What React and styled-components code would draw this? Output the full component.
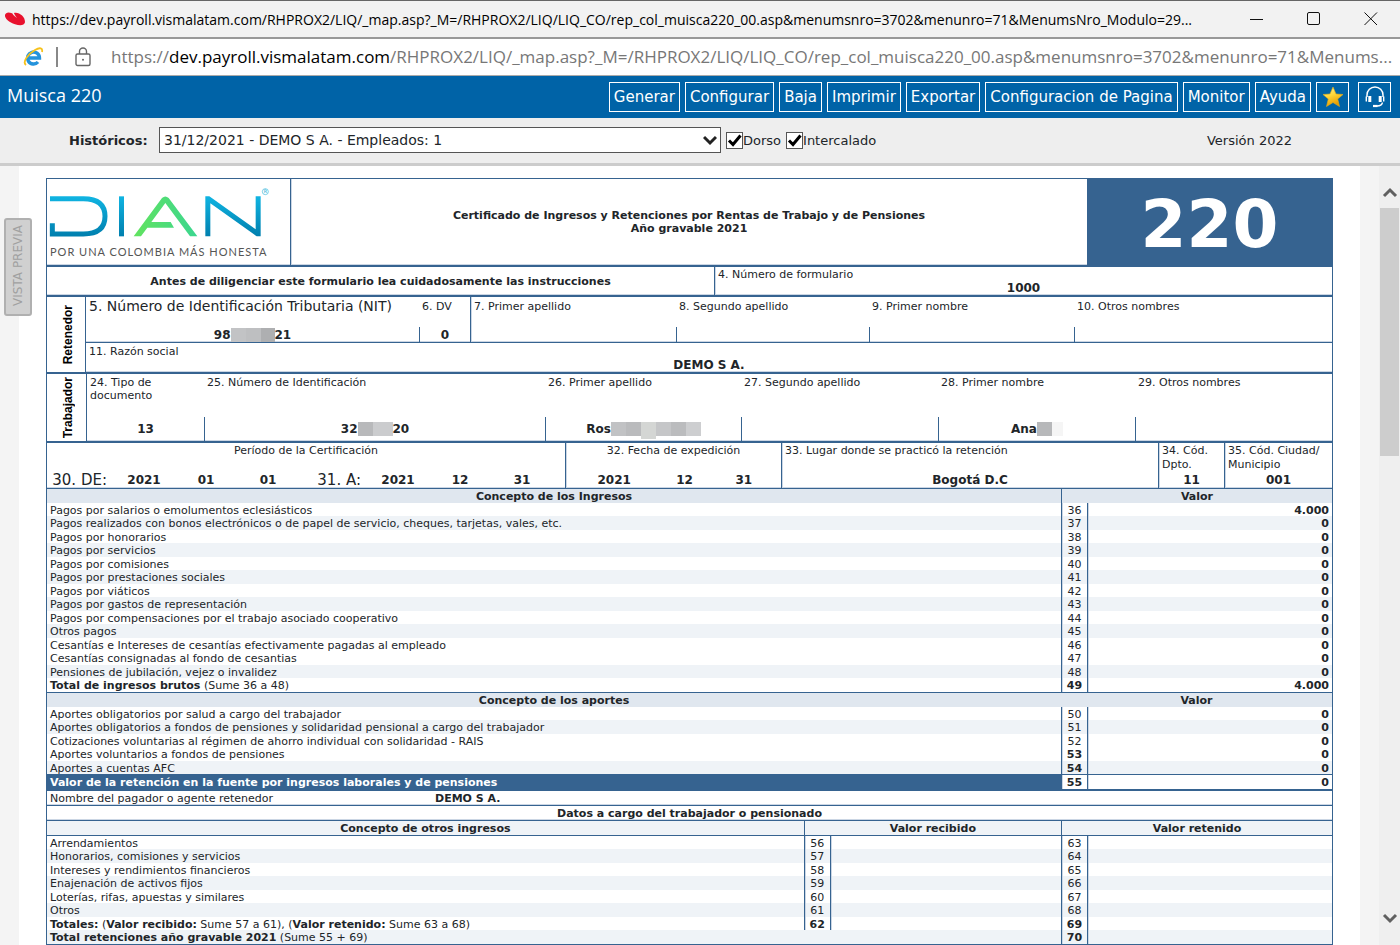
import React from 'react';
import styled, { createGlobalStyle, css } from 'styled-components';

const colours = {
    navy: '#366390',
    line: '#366390',
    soft: '#cbd6e4',
    head: '#e0e7ef',
    stripe: '#eff3f7',
    text: '#212529',
    toolbar: '#0063a7',
};

const GlobalStyle = createGlobalStyle`
    * { box-sizing: border-box; }
    body {
        margin: 0;
        background: #fff;
        color: ${colours.text};
        font-family: 'DejaVu Sans', sans-serif;
        font-size: 11px;
    }
`;

const Page = styled.div`
    display: flex;
    flex-direction: column;
    min-height: 100vh;
`;

/* ---------- browser window ---------- */

const TitleBar = styled.header`
    display: flex;
    align-items: center;
    height: 39px;
    padding-left: 4px;
    background: #f2f2f2;
    border-top: 1px solid #666;
    border-bottom: 2px solid #999;
    color: #000;
    font-family: 'Open Sans', sans-serif;
    font-size: 14px;
`;

const WindowTitle = styled.span`
    flex: 1;
    min-width: 0;
    margin-left: 6px;
    overflow: hidden;
    white-space: nowrap;
    text-overflow: ellipsis;
`;

const WindowButtons = styled.div`
    display: flex;
    padding-right: 1px;
`;

const WindowButton = styled.button`
    display: flex;
    align-items: center;
    justify-content: center;
    width: 57px;
    height: 36px;
    padding: 0;
    border: 0;
    background: none;
    color: #111;
`;

const AddressBar = styled.div`
    display: flex;
    align-items: center;
    height: 37px;
    padding: 0 5px 1px 23px;
    background: #fff;
    border-bottom: 1px solid #aaa;
    color: #777;
    font-family: 'Open Sans', sans-serif;
    font-size: 17px;
`;

const Divider = styled.span`
    width: 2px;
    height: 20px;
    margin: 0 17px 0 12px;
    background: #888;
`;

const Address = styled.span`
    flex: 1;
    min-width: 0;
    margin-left: 20px;
    overflow: hidden;
    white-space: nowrap;
    text-overflow: ellipsis;
`;

const Domain = styled.span`
    color: #000;
`;

/* ---------- application bars ---------- */

const Toolbar = styled.div`
    display: flex;
    align-items: center;
    height: 42px;
    padding: 0 9px 0 7px;
    background: ${colours.toolbar};
    color: #fff;
`;

const PageTitle = styled.h1`
    flex: 1;
    margin: 0;
    padding-bottom: 4px;
    font-family: 'Open Sans', sans-serif;
    font-size: 18px;
    font-weight: 400;
`;

const Actions = styled.nav`
    display: flex;
    gap: 5px;
`;

const Action = styled.button`
    display: flex;
    align-items: center;
    justify-content: center;
    height: 30px;
    min-width: 33px;
    padding: 0 4px;
    margin-left: ${({ $apart }) => ($apart ? '4px' : '0')};
    border: 1px solid #fff;
    border-radius: 0;
    background: ${colours.toolbar};
    color: #fff;
    font-family: inherit;
    font-size: 15px;
    white-space: nowrap;
`;

const FilterBar = styled.div`
    display: flex;
    align-items: center;
    height: 48px;
    padding: 0 108px 1px 69px;
    background: #eee;
    border-bottom: 3px solid #ccc;
    font-size: 13px;
`;

const FilterLabel = styled.label`
    width: 90px;
    font-weight: 700;
`;

const SelectBox = styled.div`
    display: grid;
    flex: 0 1 562px;
    align-items: center;

    > * {
        grid-area: 1 / 1;
    }

    svg {
        justify-self: end;
        margin-right: 4px;
        pointer-events: none;
    }
`;

const Select = styled.select`
    width: 100%;
    height: 26px;
    padding: 0 20px 0 4px;
    appearance: none;
    border: 1px solid #555;
    border-radius: 0;
    background: #fff;
    color: ${colours.text};
    font-family: inherit;
    font-size: 14px;
`;

const CheckLabel = styled.label`
    display: flex;
    align-items: center;
    margin-left: 5px;
`;

const CheckBox = styled.span`
    display: grid;

    > * {
        grid-area: 1 / 1;
    }

    input {
        width: 17px;
        height: 17px;
        margin: 0;
        appearance: none;
        border: 1px solid #555;
        background: #fff;
    }

    svg {
        visibility: hidden;
        pointer-events: none;
    }

    input:checked + svg {
        visibility: visible;
    }
`;

const Version = styled.span`
    margin-left: auto;
`;

/* ---------- viewer ---------- */

const Viewer = styled.main`
    position: relative;
    display: flex;
    flex: 1;
    padding-left: 19px;
    background: #f4f4f4;
`;

const Paper = styled.div`
    flex: 1;
    min-width: 0;
    margin-right: 19px;
    padding: 12px 27px 0;
    background: #fff;
`;

const PreviewTab = styled.button`
    position: absolute;
    top: 52px;
    left: 4px;
    width: 28px;
    height: 98px;
    padding: 0;
    border: 2px solid #b0b0b0;
    border-radius: 3px;
    background: #d0d0d0;
    color: #a0a0a0;
    font-family: inherit;
    font-size: 12px;
    white-space: nowrap;

    span {
        writing-mode: vertical-rl;
        transform: rotate(180deg);
    }
`;

const ScrollBar = styled.div`
    display: flex;
    flex-direction: column;
    align-items: center;
    width: 21px;
    padding: 21px 1px 21px;
    background: #efefef;
`;

const Thumb = styled.div`
    width: 19px;
    height: 248px;
    margin: 9px 0 auto;
    background: #cdcdcd;
`;

/* ---------- form ---------- */

const Form = styled.article`
    border: 1px solid ${colours.line};
`;

const Row = styled.section`
    display: grid;
    grid-template-columns: ${({ $cols }) => $cols};
    min-height: ${({ $height }) => $height}px;
    border-bottom: ${({ $thick }) => ($thick ? 2 : 1)}px solid ${colours.line};
`;

const FieldRow = styled.div`
    display: grid;
    grid-template-columns: ${({ $cols }) => $cols};
`;

const Cell = styled.div`
    display: flex;
    flex-direction: column;
    min-width: 0;
    box-shadow: inset 0 -1px ${colours.soft};
    ${({ $divided }) => $divided && css`
        border-left: 1px solid ${colours.line};
        box-shadow: inset 1px -1px ${colours.soft};
    `}
`;

const LogoCell = styled(Cell)`
    padding: 7px 2px 0;
`;

const Slogan = styled.span`
    margin-top: 7px;
    padding-left: 1px;
    color: #555;
    font-family: Lato, sans-serif;
    font-size: 11px;
    letter-spacing: 1px;
    line-height: 14px;
    white-space: nowrap;
`;

const Centered = styled(Cell)`
    align-items: center;
    justify-content: center;
    font-weight: 700;
    line-height: 13px;
    text-align: center;
`;

const FormNumber = styled.div`
    display: flex;
    align-items: center;
    justify-content: center;
    padding-top: 6px;
    background: ${colours.navy};
    color: #fff;
    font-size: 66px;
    font-weight: 700;
    line-height: 80px;
`;

const SideLabel = styled.div`
    display: flex;
    align-items: center;
    justify-content: center;
    padding-left: 3px;
    border-right: 1px solid ${colours.line};
    color: #000;
    font-family: 'Liberation Sans', sans-serif;
    font-size: 12px;
    font-weight: 700;
    line-height: 12px;

    span {
        writing-mode: vertical-rl;
        transform: rotate(180deg);
    }
`;

const Stack = styled.div`
    display: flex;
    flex-direction: column;
    min-width: 0;
`;

const Label = styled.span`
    padding: ${({ $top = 2 }) => $top}px 3px 0;
    font-size: ${({ $large }) => ($large ? 14 : 11)}px;
    line-height: ${({ $line = 13 }) => $line}px;
    text-align: ${({ $center }) => ($center ? 'center' : 'left')};
`;

const Value = styled.span`
    display: flex;
    align-items: center;
    justify-content: center;
    height: ${({ $height = 15 }) => $height}px;
    margin-top: auto;
    border-left: ${({ $tick }) => ($tick ? `1px solid ${colours.line}` : '0')};
    font-size: 12px;
    font-weight: 700;
`;

const Dates = styled.div`
    display: grid;
    grid-template-columns: ${({ $cols }) => $cols};
    align-items: center;
    height: 16px;
    margin-top: auto;
    font-size: 12px;
    font-weight: 700;
    line-height: 16px;
    text-align: center;
`;

const DateLabel = styled.span`
    padding-right: 6px;
    font-size: 15px;
    font-weight: 400;
    text-align: right;
    white-space: nowrap;
`;

const Mask = styled.span`
    display: inline-flex;
    height: 14px;
`;

const Tile = styled.i`
    width: ${({ $width }) => $width}px;
    height: ${({ $tall }) => ($tall ? 17 : 14)}px;
    background: ${({ $tone }) => $tone};
`;

/* ---------- tables ---------- */

const Table = styled.table`
    width: 100%;
    table-layout: fixed;
    border-spacing: 0;
    border-bottom: ${({ $last, $thick }) => ($last ? 0 : $thick ? 2 : 1)}px solid ${colours.line};
`;

const Col = styled.col`
    width: ${({ $width }) => $width};
`;

const Th = styled.th`
    height: 14px;
    padding: 2px 0 0;
    background: ${({ $pale }) => ($pale ? colours.stripe : colours.head)};
    border-left: ${({ $divided }) => ($divided ? `1px solid ${colours.line}` : '0')};
    border-bottom: ${({ $pale }) => ($pale ? `1px solid ${colours.line}` : '0')};
    line-height: 12px;
`;

const Tr = styled.tr`
    height: ${({ $height }) => $height}px;
    line-height: ${({ $height }) => $height - 2}px;
    background: ${({ $striped }) => ($striped ? colours.stripe : '#fff')};
`;

const Td = styled.td`
    padding: 2px 3px 0;
    white-space: nowrap;
`;

const NumberTd = styled(Td)`
    padding: 2px 0 0;
    border-left: 1px solid ${colours.line};
    box-shadow: inset 1px 0 ${colours.soft};
    font-weight: ${({ $bold }) => ($bold ? 700 : 400)};
    text-align: center;
`;

const AmountTd = styled(Td)`
    border-left: 1px solid ${colours.line};
    box-shadow: inset 1px 0 ${colours.soft};
    font-weight: 700;
    text-align: right;
`;

const WithholdingTr = styled.tr`
    height: 15px;
    line-height: 12px;
    font-weight: 700;

    td {
        border-top: 1px solid ${colours.line};
    }

    td:first-child {
        background: ${colours.navy};
        color: #fff;
    }
`;

const Strip = styled.div`
    display: grid;
    grid-template-columns: ${({ $cols = '1fr' }) => $cols};
    height: 15px;
    padding: 2px 3px 0;
    border-bottom: 1px solid ${colours.line};
    box-shadow: inset 0 -1px ${colours.soft};
    line-height: 12px;
    text-align: ${({ $center }) => ($center ? 'center' : 'left')};
`;

const income = [
    ['Pagos por salarios o emolumentos eclesiásticos', 36, '4.000'],
    ['Pagos realizados con bonos electrónicos o de papel de servicio, cheques, tarjetas, vales, etc.', 37, '0', true],
    ['Pagos por honorarios', 38, '0'],
    ['Pagos por servicios', 39, '0', true],
    ['Pagos por comisiones', 40, '0'],
    ['Pagos por prestaciones sociales', 41, '0', true],
    ['Pagos por viáticos', 42, '0'],
    ['Pagos por gastos de representación', 43, '0', true],
    ['Pagos por compensaciones por el trabajo asociado cooperativo', 44, '0'],
    ['Otros pagos', 45, '0', true],
    ['Cesantías e Intereses de cesantías efectivamente pagadas al empleado', 46, '0'],
    ['Cesantías consignadas al fondo de cesantias', 47, '0'],
    ['Pensiones de jubilación, vejez o invalidez', 48, '0', true],
    [<><b>Total de ingresos brutos</b> (Sume 36 a 48)</>, 49, '4.000'],
];

const contributions = [
    ['Aportes obligatorios por salud a cargo del trabajador', 50, '0'],
    ['Aportes obligatorios a fondos de pensiones y solidaridad pensional a cargo del trabajador', 51, '0', true],
    ['Cotizaciones voluntarias al régimen de ahorro individual con solidaridad - RAIS', 52, '0'],
    ['Aportes voluntarios a fondos de pensiones', 53, '0'],
    ['Aportes a cuentas AFC', 54, '0', true],
];

const otherIncome = [
    ['Arrendamientos', 56, 63],
    ['Honorarios, comisiones y servicios', 57, 64],
    ['Intereses y rendimientos financieros', 58, 65],
    ['Enajenación de activos fijos', 59, 66],
    ['Loterías, rifas, apuestas y similares', 60, 67],
    ['Otros', 61, 68],
    [<><b>Totales:</b> (<b>Valor recibido:</b> Sume 57 a 61), (<b>Valor retenido:</b> Sume 63 a 68)</>, 62, 69],
];

const boldNumbers = [49, 53, 54, 62, 69, 70];

// rows alternate between 13 and 14 pixels
const rowHeight = (index) => (index % 2 ? 14 : 13);

const VismaIcon = () => (
    <svg width="22" height="16" viewBox="12 34 66 48" aria-hidden="true">
        <path d="M15 46C17 36 32 36 42 45L57 60C48 52 43 46 42 40C56 36 76 50 75 68C73 78 60 79 45 74C28 68 13 56 15 46Z" fill="#e8112d" />
        <path d="M41 41C43 47 49 54 56 59L46 51C43 49 40 46 38 43Z" fill="#f2f2f2" />
    </svg>
);

const ExplorerIcon = () => (
    <svg width="21" height="20" viewBox="0 0 21 20" aria-hidden="true">
        <path d="M4.500 11H16.500A6 6 0 1 0 15 15" fill="none" stroke="#2493dc" strokeWidth="3.400" />
        <path d="M3 18C-1 15 5 7 12 3C17 0 20 1 19 5" fill="none" stroke="#f6c21c" strokeWidth="1.800" />
    </svg>
);

const LockIcon = () => (
    <svg width="16" height="20" viewBox="0 0 16 20" fill="none" stroke="#666" strokeWidth="1.400" aria-hidden="true">
        <rect x="1" y="7" width="14" height="11.500" rx="1.500" />
        <path d="M4.500 7V4.500A3.500 3.500 0 0 1 11.500 4.500V7" />
        <circle cx="8" cy="12.700" r="1" fill="#666" stroke="none" />
    </svg>
);

const StarIcon = () => (
    <svg width="22" height="22" viewBox="0 0 22 22" aria-hidden="true">
        <defs>
            <linearGradient id="gold" x1="0" y1="0" x2="0.4" y2="1">
                <stop offset="0" stopColor="#fff3a0" />
                <stop offset="0.5" stopColor="#ffd83a" />
                <stop offset="1" stopColor="#e59a00" />
            </linearGradient>
        </defs>
        <path d="M11 1L14 8L21 8.500L15.700 13L17.500 20.500L11 16.500L4.500 20.500L6.300 13L1 8.500L8 8Z" fill="url(#gold)" stroke="#e8ac13" strokeWidth="0.6" strokeLinejoin="round" />
    </svg>
);

const HeadsetIcon = () => (
    <svg width="20" height="22" viewBox="0 0 20 22" fill="none" stroke="#fff" aria-hidden="true">
        <path d="M2 11V9A8 8 0 0 1 18 9V11" strokeWidth="1.500" />
        <path d="M4.800 10V16M15.200 10V16" strokeWidth="3" />
        <path d="M1.300 10.500V15.500M18.700 10.500V15.500" strokeWidth="1.400" />
        <path d="M17.500 16.500C17 19 15 20 12 20" strokeWidth="1.300" />
        <path d="M8 20H12.500" strokeWidth="2.200" />
    </svg>
);

const Tick = () => (
    <svg width="17" height="17" viewBox="0 0 17 17" aria-hidden="true">
        <path d="M3 8.500L7 12.500L14.500 3.500" fill="none" stroke="#000" strokeWidth="3" />
    </svg>
);

const Chevron = ({ size = 14, down, colour = '#606060' }) => (
    <svg width={size} height="12" viewBox="0 0 14 12" aria-hidden="true">
        <path d={down ? 'M1 3L7 9L13 3' : 'M1 9L7 3L13 9'} fill="none" stroke={colour} strokeWidth="3" />
    </svg>
);

const DianLogo = () => (
    <svg width="221" height="52" viewBox="57 33 663 156" role="img" aria-label="DIAN">
        <defs>
            <linearGradient id="blue" gradientUnits="userSpaceOnUse" x1="0" y1="64" x2="0" y2="184">
                <stop offset="0" stopColor="#10b4e2" />
                <stop offset="1" stopColor="#007fae" />
            </linearGradient>
            <linearGradient id="green" gradientUnits="userSpaceOnUse" x1="311" y1="0" x2="502" y2="0">
                <stop offset="0" stopColor="#62e35f" />
                <stop offset="1" stopColor="#3bd690" />
            </linearGradient>
        </defs>
        <path d="M60 71H160C208 71 225 92 225 124S208 177 160 177H67V145" fill="none" stroke="url(#blue)" strokeWidth="15" />
        <path d="M267 64H282V184H267Z" fill="url(#blue)" />
        <path d="M311 184L396 69Q406 60 416 69L502 184H480L406 84L364 141H422L432 158H352L333 184Z" fill="url(#green)" />
        <path d="M526 64H538L677 163V64H692V184H680L541 85V184H526Z" fill="url(#blue)" />
        <circle cx="706" cy="50" r="9" fill="none" stroke="#3bb9dc" strokeWidth="2" />
        <text x="706" y="55" fill="#1aa6d0" fontSize="14" textAnchor="middle">R</text>
    </svg>
);

const Masked = ({ tiles }) => (
    <Mask>
        {tiles.map(([tone, width, tall], index) => (
            <Tile key={index} $tone={tone} $width={width} $tall={tall} />
        ))}
    </Mask>
);

const Field = ({ label, large, tick, divided, top = 3, height, children }) => (
    <Cell $divided={divided}>
        <Label $large={large} $top={top}>{label}</Label>
        <Value $tick={tick} $height={height}>{children}</Value>
    </Cell>
);

const ConceptTable = ({ title, rows, divided, thick, children }) => (
    <Table $thick={thick}>
        <colgroup>
            <Col />
            <Col $width="26px" />
            <Col $width="245px" />
        </colgroup>
        <thead>
            <tr>
                <Th>{title}</Th>
                <Th colSpan={2} $divided={divided}>Valor</Th>
            </tr>
        </thead>
        <tbody>
            {rows.map(([label, number, amount, striped], index) => (
                <Tr key={number} $height={rowHeight(index)} $striped={striped}>
                    <Td>{label}</Td>
                    <NumberTd $bold={boldNumbers.includes(number)}>{number}</NumberTd>
                    <AmountTd>{amount}</AmountTd>
                </Tr>
            ))}
            {children}
        </tbody>
    </Table>
);

const Certificate = () => (
    <Form>
        <Row $cols="243px 1fr 245px" $height={88} $thick>
            <LogoCell>
                <DianLogo />
                <Slogan>POR UNA COLOMBIA MÁS HONESTA</Slogan>
            </LogoCell>
            <Centered $divided>
                <span>Certificado de Ingresos y Retenciones por Rentas de Trabajo y de Pensiones</span>
                <span>Año gravable 2021</span>
            </Centered>
            <FormNumber>220</FormNumber>
        </Row>

        <Row $cols="667fr 618fr" $height={30} $thick>
            <Centered>Antes de diligenciar este formulario lea cuidadosamente las instrucciones</Centered>
            <Cell $divided>
                <Label $top={1}>4. Número de formulario</Label>
                <Value $height={14}>1000</Value>
            </Cell>
        </Row>

        <Row $cols="39px 1fr" $height={77} $thick>
            <SideLabel><span>Retenedor</span></SideLabel>
            <Stack>
                <Row $cols="333fr 51fr 206fr 193fr 205fr 258fr" $height={46}>
                    <Field label="5. Número de Identificación Tributaria (NIT)" large>
                        98<Masked tiles={[['#c2c3c5', 15], ['#bebfc1', 15], ['#aeafb1', 14]]} />21
                    </Field>
                    <Field label="6. DV" tick>0</Field>
                    <Field label="7. Primer apellido" divided />
                    <Field label="8. Segundo apellido" tick />
                    <Field label="9. Primer nombre" tick />
                    <Field label="10. Otros nombres" tick />
                </Row>
                <Cell>
                    <Label>11. Razón social</Label>
                    <Value $height={14}>DEMO S A.</Value>
                </Cell>
            </Stack>
        </Row>

        <Row $cols="40px 1fr" $height={69} $thick>
            <SideLabel><span>Trabajador</span></SideLabel>
            <FieldRow $cols="117fr 341fr 196fr 197fr 197fr 197fr">
                <Field label={<>24. Tipo de<br />documento</>} top={2} height={24}>13</Field>
                <Field label="25. Número de Identificación" tick top={2} height={24}>
                    32<Masked tiles={[['#b8b9bb', 15], ['#cbccce', 20]]} />20
                </Field>
                <Field label="26. Primer apellido" tick top={2} height={24}>
                    Ros
                    <Masked
                        tiles={[
                            ['#c1c2c4', 15], ['#babbbd', 15], ['#d4d6d4', 15, true],
                            ['#c5c6c8', 15], ['#bbbcbe', 15], ['#cdced0', 15],
                        ]}
                    />
                </Field>
                <Field label="27. Segundo apellido" tick top={2} height={24} />
                <Field label="28. Primer nombre" tick top={2} height={24}>
                    Ana<Masked tiles={[['#b7b8ba', 15], ['#f5f5f5', 11]]} />
                </Field>
                <Field label="29. Otros nombres" tick top={2} height={24} />
            </FieldRow>
        </Row>

        <Row $cols="518fr 216fr 377fr 66fr 108fr" $height={46}>
            <Cell>
                <Label $top={1} $center>Período de la Certificación</Label>
                <Dates $cols="66fr 62fr 62fr 62fr 68fr 62fr 62fr 62fr 12fr">
                    <DateLabel>30. DE:</DateLabel>
                    <span>2021</span>
                    <span>01</span>
                    <span>01</span>
                    <DateLabel>31. A:</DateLabel>
                    <span>2021</span>
                    <span>12</span>
                    <span>31</span>
                </Dates>
            </Cell>
            <Cell $divided>
                <Label $top={1} $center>32. Fecha de expedición</Label>
                <Dates $cols="96fr 44fr 74fr">
                    <span>2021</span>
                    <span>12</span>
                    <span>31</span>
                </Dates>
            </Cell>
            <Cell $divided>
                <Label $top={1}>33. Lugar donde se practicó la retención</Label>
                <Value $height={16}>Bogotá D.C</Value>
            </Cell>
            <Cell $divided>
                <Label $top={1} $line={14}>34. Cód. Dpto.</Label>
                <Value $height={16}>11</Value>
            </Cell>
            <Cell $divided>
                <Label $top={1} $line={14}>35. Cód. Ciudad/<br />Municipio</Label>
                <Value $height={16}>001</Value>
            </Cell>
        </Row>

        <ConceptTable title="Concepto de los Ingresos" rows={income} divided />

        <ConceptTable title="Concepto de los aportes" rows={contributions} thick>
            <WithholdingTr>
                <Td>Valor de la retención en la fuente por ingresos laborales y de pensiones</Td>
                <NumberTd $bold>55</NumberTd>
                <AmountTd>0</AmountTd>
            </WithholdingTr>
        </ConceptTable>

        <Strip $cols="385fr 894fr">
            <span>Nombre del pagador o agente retenedor</span>
            <b>DEMO S A.</b>
        </Strip>
        <Strip $center><b>Datos a cargo del trabajador o pensionado</b></Strip>

        <Table $last>
            <colgroup>
                <Col />
                <Col $width="26px" />
                <Col $width="18%" />
                <Col $width="26px" />
                <Col $width="245px" />
            </colgroup>
            <thead>
                <tr>
                    <Th $pale>Concepto de otros ingresos</Th>
                    <Th $pale $divided colSpan={2}>Valor recibido</Th>
                    <Th $pale $divided colSpan={2}>Valor retenido</Th>
                </tr>
            </thead>
            <tbody>
                {otherIncome.map(([label, received, withheld], index) => (
                    <Tr key={received} $height={rowHeight(index)} $striped={index % 2 === 1}>
                        <Td>{label}</Td>
                        <NumberTd $bold={boldNumbers.includes(received)}>{received}</NumberTd>
                        <AmountTd />
                        <NumberTd $bold={boldNumbers.includes(withheld)}>{withheld}</NumberTd>
                        <AmountTd />
                    </Tr>
                ))}
                <Tr $height={14} $striped>
                    <Td colSpan={3}><b>Total retenciones año gravable 2021</b> (Sume 55 + 69)</Td>
                    <NumberTd $bold>70</NumberTd>
                    <AmountTd />
                </Tr>
            </tbody>
        </Table>
    </Form>
);

const App = () => (
    <Page>
        <GlobalStyle />
        <TitleBar>
            <VismaIcon />
            <WindowTitle>
                https://dev.payroll.vismalatam.com/RHPROX2/LIQ/_map.asp?_M=/RHPROX2/LIQ/LIQ_CO/rep_col_muisca220_00.asp&amp;menumsnro=3702&amp;menunro=71&amp;MenumsNro_Modulo=29...
            </WindowTitle>
            <WindowButtons>
                <WindowButton aria-label="Minimizar">
                    <svg width="14" height="14"><path d="M0 7.500H13" stroke="currentColor" /></svg>
                </WindowButton>
                <WindowButton aria-label="Maximizar">
                    <svg width="14" height="14"><rect x="0.5" y="0.5" width="12" height="12" rx="1.500" fill="none" stroke="currentColor" /></svg>
                </WindowButton>
                <WindowButton aria-label="Cerrar">
                    <svg width="14" height="14"><path d="M0.500 0.500L13 13M13 0.500L0.500 13" stroke="currentColor" /></svg>
                </WindowButton>
            </WindowButtons>
        </TitleBar>
        <AddressBar>
            <ExplorerIcon />
            <Divider />
            <LockIcon />
            <Address>
                https://<Domain>dev.payroll.vismalatam.com</Domain>/RHPROX2/LIQ/_map.asp?_M=/RHPROX2/LIQ/LIQ_CO/rep_col_muisca220_00.asp&amp;menumsnro=3702&amp;menunro=71&amp;Menums...
            </Address>
        </AddressBar>

        <Toolbar>
            <PageTitle>Muisca 220</PageTitle>
            <Actions>
                <Action>Generar</Action>
                <Action>Configurar</Action>
                <Action>Baja</Action>
                <Action>Imprimir</Action>
                <Action>Exportar</Action>
                <Action>Configuracion de Pagina</Action>
                <Action>Monitor</Action>
                <Action>Ayuda</Action>
                <Action aria-label="Favoritos"><StarIcon /></Action>
                <Action $apart aria-label="Soporte"><HeadsetIcon /></Action>
            </Actions>
        </Toolbar>

        <FilterBar>
            <FilterLabel htmlFor="historicos">Históricos:</FilterLabel>
            <SelectBox>
                <Select id="historicos">
                    <option>31/12/2021 - DEMO S A. - Empleados: 1</option>
                </Select>
                <Chevron down colour="#222" />
            </SelectBox>
            <CheckLabel>
                <CheckBox><input type="checkbox" defaultChecked /><Tick /></CheckBox>
                Dorso
            </CheckLabel>
            <CheckLabel>
                <CheckBox><input type="checkbox" defaultChecked /><Tick /></CheckBox>
                Intercalado
            </CheckLabel>
            <Version>Versión 2022</Version>
        </FilterBar>

        <Viewer>
            <Paper>
                <Certificate />
            </Paper>
            <ScrollBar>
                <Chevron size={16} />
                <Thumb />
                <Chevron size={16} down />
            </ScrollBar>
            <PreviewTab><span>VISTA PREVIA</span></PreviewTab>
        </Viewer>
    </Page>
);

export default App;
